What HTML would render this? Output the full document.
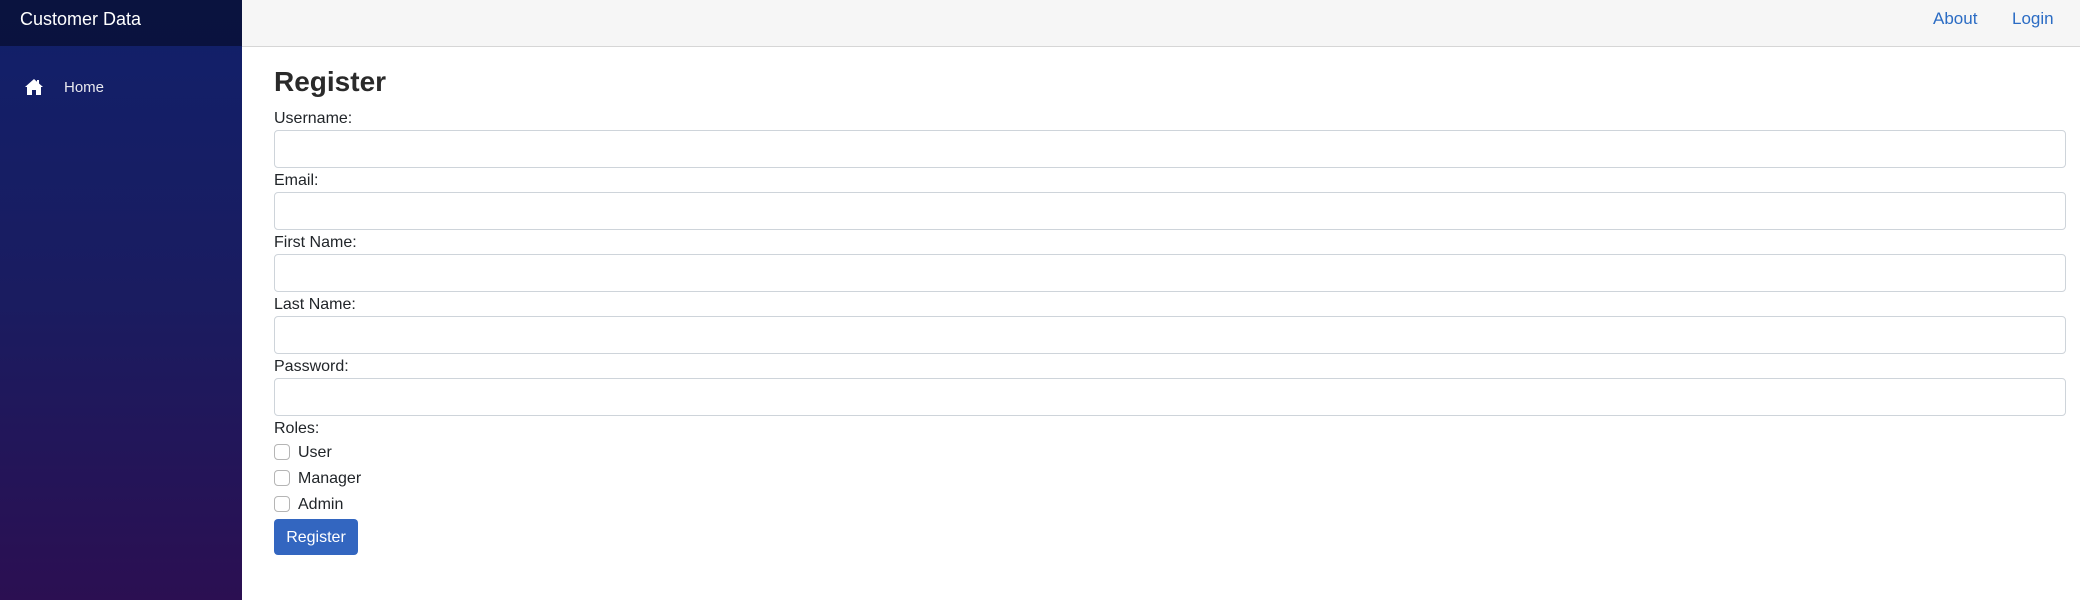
<!DOCTYPE html>
<html><head><meta charset="utf-8"><style>
*{box-sizing:border-box;margin:0;padding:0}
body{width:2080px;height:600px;overflow:hidden;font-family:"Liberation Sans",Arial,sans-serif;background:#fff;position:relative;color:#212529}
.side{position:absolute;left:0;top:0;width:242px;height:600px;background:linear-gradient(180deg,#11206a 0%,#1a1c60 50%,#2b0f52 100%)}
.side .hd{height:46px;background:rgba(0,0,0,0.4);color:#fff;font-size:18px;padding:9px 0 0 20px}
.home{position:absolute;left:24px;top:77px;color:#e8e8ee;font-size:15px}
.home svg{position:absolute;left:0;top:1px}
.home span{position:absolute;left:40px;top:2px;white-space:nowrap}
.top{position:absolute;left:242px;top:0;right:0;height:47px;background:#f6f6f6;border-bottom:1px solid #d6d6d6}
.top a{position:absolute;top:9px;color:#2b6cc4;font-size:17px;text-decoration:none}
h1{position:absolute;left:274px;top:64px;font-size:28px;font-weight:bold;line-height:36px;color:#2a2a2a}
.f{position:absolute;left:274px;right:14px;font-size:16px}
.lab{height:24px;line-height:25px}
.inp{height:38px;border:1px solid #ced4da;border-radius:4px;background:#fff}
.cb{position:absolute;left:274px;font-size:16px;height:26px;line-height:26px}
.cb i{position:absolute;left:0;top:4px;width:16px;height:16px;border:1px solid #b5b5b5;border-radius:4px;background:#fff}
.cb span{position:absolute;left:24px;white-space:nowrap}
.btn{position:absolute;left:274px;top:519px;width:84px;height:36px;background:#3366c0;border-radius:4px;color:#fff;font-size:16px;text-align:center;line-height:37px}
</style></head><body>
<div class="side"><div class="hd">Customer Data</div>
<div class="home"><svg width="20" height="18" viewBox="0 0 20 18"><path d="M10 1 L1 9 L3 9 L3 17 L8 17 L8 12 L12 12 L12 17 L17 17 L17 9 L19 9 L15 5.5 L15 2 L13 2 L13 3.8 Z" fill="#fff"/></svg><span>Home</span></div>
</div>
<div class="top"><a style="left:1691px">About</a><a style="left:1770px">Login</a></div>
<h1>Register</h1>
<div class="f" style="top:106px"><div class="lab">Username:</div><div class="inp"></div></div>
<div class="f" style="top:168px"><div class="lab">Email:</div><div class="inp"></div></div>
<div class="f" style="top:230px"><div class="lab">First Name:</div><div class="inp"></div></div>
<div class="f" style="top:292px"><div class="lab">Last Name:</div><div class="inp"></div></div>
<div class="f" style="top:354px"><div class="lab">Password:</div><div class="inp"></div></div>
<div class="f" style="top:416px"><div class="lab">Roles:</div></div>
<div class="cb" style="top:440px"><i></i><span>User</span></div>
<div class="cb" style="top:466px"><i></i><span>Manager</span></div>
<div class="cb" style="top:492px"><i></i><span>Admin</span></div>
<div class="btn">Register</div>
</body></html>
